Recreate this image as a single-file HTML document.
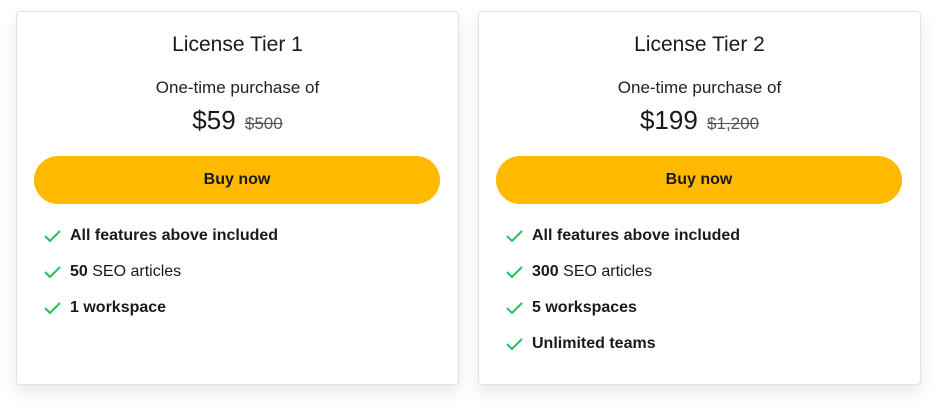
<!DOCTYPE html>
<html><head><style>
body{margin:0;background:#fff;width:947px;height:413px;font-family:"Liberation Sans",Arial,sans-serif;color:#1a1a1a;position:relative;overflow:hidden}
.card{position:absolute;top:11px;width:441px;height:372px;background:#fff;border:1px solid #e2e2e2;border-radius:4px;box-shadow:0 8px 16px rgba(0,0,0,.09)}
.t{position:absolute;top:20px;width:100%;text-align:center;font-size:21px;line-height:26px}
.s{position:absolute;top:66px;width:100%;text-align:center;font-size:17px;line-height:20px;color:#222}
.p{position:absolute;top:92px;width:100%;text-align:center;font-size:26px;line-height:32px}
.p del{font-size:17px;color:#555;margin-left:2px}
.b{position:absolute;top:144px;left:17px;width:406px;height:48px;border-radius:24px;background:#ffba00;text-align:center;line-height:48px;font-weight:bold;font-size:16px}
.l{position:absolute;left:27px;font-size:16px;line-height:20px}
.l svg{position:absolute;left:0;top:4px}
.l span{margin-left:26px}
</style></head><body>
<div class="card" style="left:16px">
<div class="t">License Tier 1</div>
<div class="s">One-time purchase of</div>
<div class="p">$59 <del>$500</del></div>
<div class="b">Buy now</div>
<div class="l" style="top:214px"><svg width="17" height="13"><path d="M1 6l5 5 10-10" stroke="#22c05a" stroke-width="2" fill="none"/></svg><span><b>All features above included</b></span></div>
<div class="l" style="top:250px"><svg width="17" height="13"><path d="M1 6l5 5 10-10" stroke="#22c05a" stroke-width="2" fill="none"/></svg><span><b>50</b> SEO articles</span></div>
<div class="l" style="top:286px"><svg width="17" height="13"><path d="M1 6l5 5 10-10" stroke="#22c05a" stroke-width="2" fill="none"/></svg><span><b>1 workspace</b></span></div>
</div>
<div class="card" style="left:478px">
<div class="t">License Tier 2</div>
<div class="s">One-time purchase of</div>
<div class="p">$199 <del>$1,200</del></div>
<div class="b">Buy now</div>
<div class="l" style="top:214px"><svg width="17" height="13"><path d="M1 6l5 5 10-10" stroke="#22c05a" stroke-width="2" fill="none"/></svg><span><b>All features above included</b></span></div>
<div class="l" style="top:250px"><svg width="17" height="13"><path d="M1 6l5 5 10-10" stroke="#22c05a" stroke-width="2" fill="none"/></svg><span><b>300</b> SEO articles</span></div>
<div class="l" style="top:286px"><svg width="17" height="13"><path d="M1 6l5 5 10-10" stroke="#22c05a" stroke-width="2" fill="none"/></svg><span><b>5 workspaces</b></span></div>
<div class="l" style="top:322px"><svg width="17" height="13"><path d="M1 6l5 5 10-10" stroke="#22c05a" stroke-width="2" fill="none"/></svg><span><b>Unlimited teams</b></span></div>
</div>
</body></html>
